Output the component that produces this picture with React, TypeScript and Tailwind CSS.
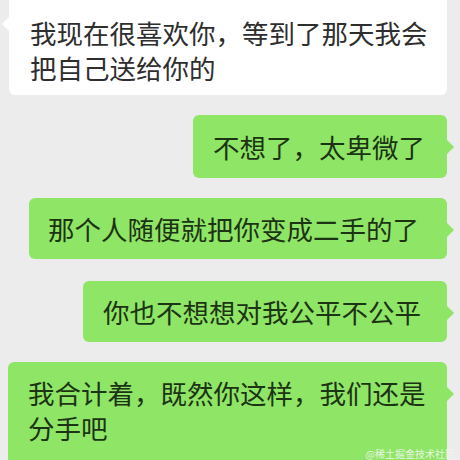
import type { ReactNode } from 'react'

type BubbleProps = {
  side: 'left' | 'right'
  tone: 'white' | 'green'
  className?: string
  children: ReactNode
}

function Bubble({ side, tone, className = '', children }: BubbleProps) {
  const fill = tone === 'green' ? 'bg-[#8fe565] text-[#1c3314]' : 'bg-white text-[#2e2e2e]'
  const tail = tone === 'green' ? 'bg-[#8fe565]' : 'bg-white'
  return (
    <div className={`relative rounded-[6px] ${fill} ${className}`}>
      {side === 'right' ? (
        <span className={`absolute right-[-5px] top-[27px] h-[10px] w-[10px] rotate-45 ${tail}`} />
      ) : (
        <span className={`absolute left-[-5px] top-[27px] h-[10px] w-[10px] rotate-45 ${tail}`} />
      )}
      <p className="relative text-[26.5px] leading-[35px]">{children}</p>
    </div>
  )
}

export default function App() {
  return (
    <div
      className="relative flex h-[460px] w-[460px] flex-col overflow-hidden bg-[#ececec]"
      style={{ fontFamily: '"Noto Sans CJK SC", "Noto Sans", sans-serif' }}
    >
      <Bubble side="left" tone="white" className="-mt-[8px] ml-[9px] w-[438px] pb-[10px] pl-[21px] pr-[14px] pt-[23px]">
        我现在很喜欢你，等到了那天我会把自己送给你的
      </Bubble>

      <Bubble side="right" tone="green" className="mt-[20px] mr-[13px] w-[254px] self-end py-[14px] pl-[20px]">
        不想了，太卑微了
      </Bubble>

      <Bubble side="right" tone="green" className="mt-[20px] mr-[13px] w-[418px] self-end py-[13px] pl-[19px]">
        那个人随便就把你变成二手的了
      </Bubble>

      <Bubble side="right" tone="green" className="mt-[22px] mr-[13px] w-[364px] self-end py-[13px] pl-[20px]">
        你也不想想对我公平不公平
      </Bubble>

      <Bubble side="right" tone="green" className="mt-[20px] mr-[13px] w-[439px] self-end pb-[30px] pl-[20px] pr-[12px] pt-[13px]">
        我合计着，既然你这样，我们还是分手吧
      </Bubble>

      {/* watermark in the corner */}
      <span className="absolute bottom-[1px] right-[5px] whitespace-nowrap text-[10px] leading-[10px] text-[#f2f7ee] opacity-90">
        @稀土掘金技术社区
      </span>
    </div>
  )
}
